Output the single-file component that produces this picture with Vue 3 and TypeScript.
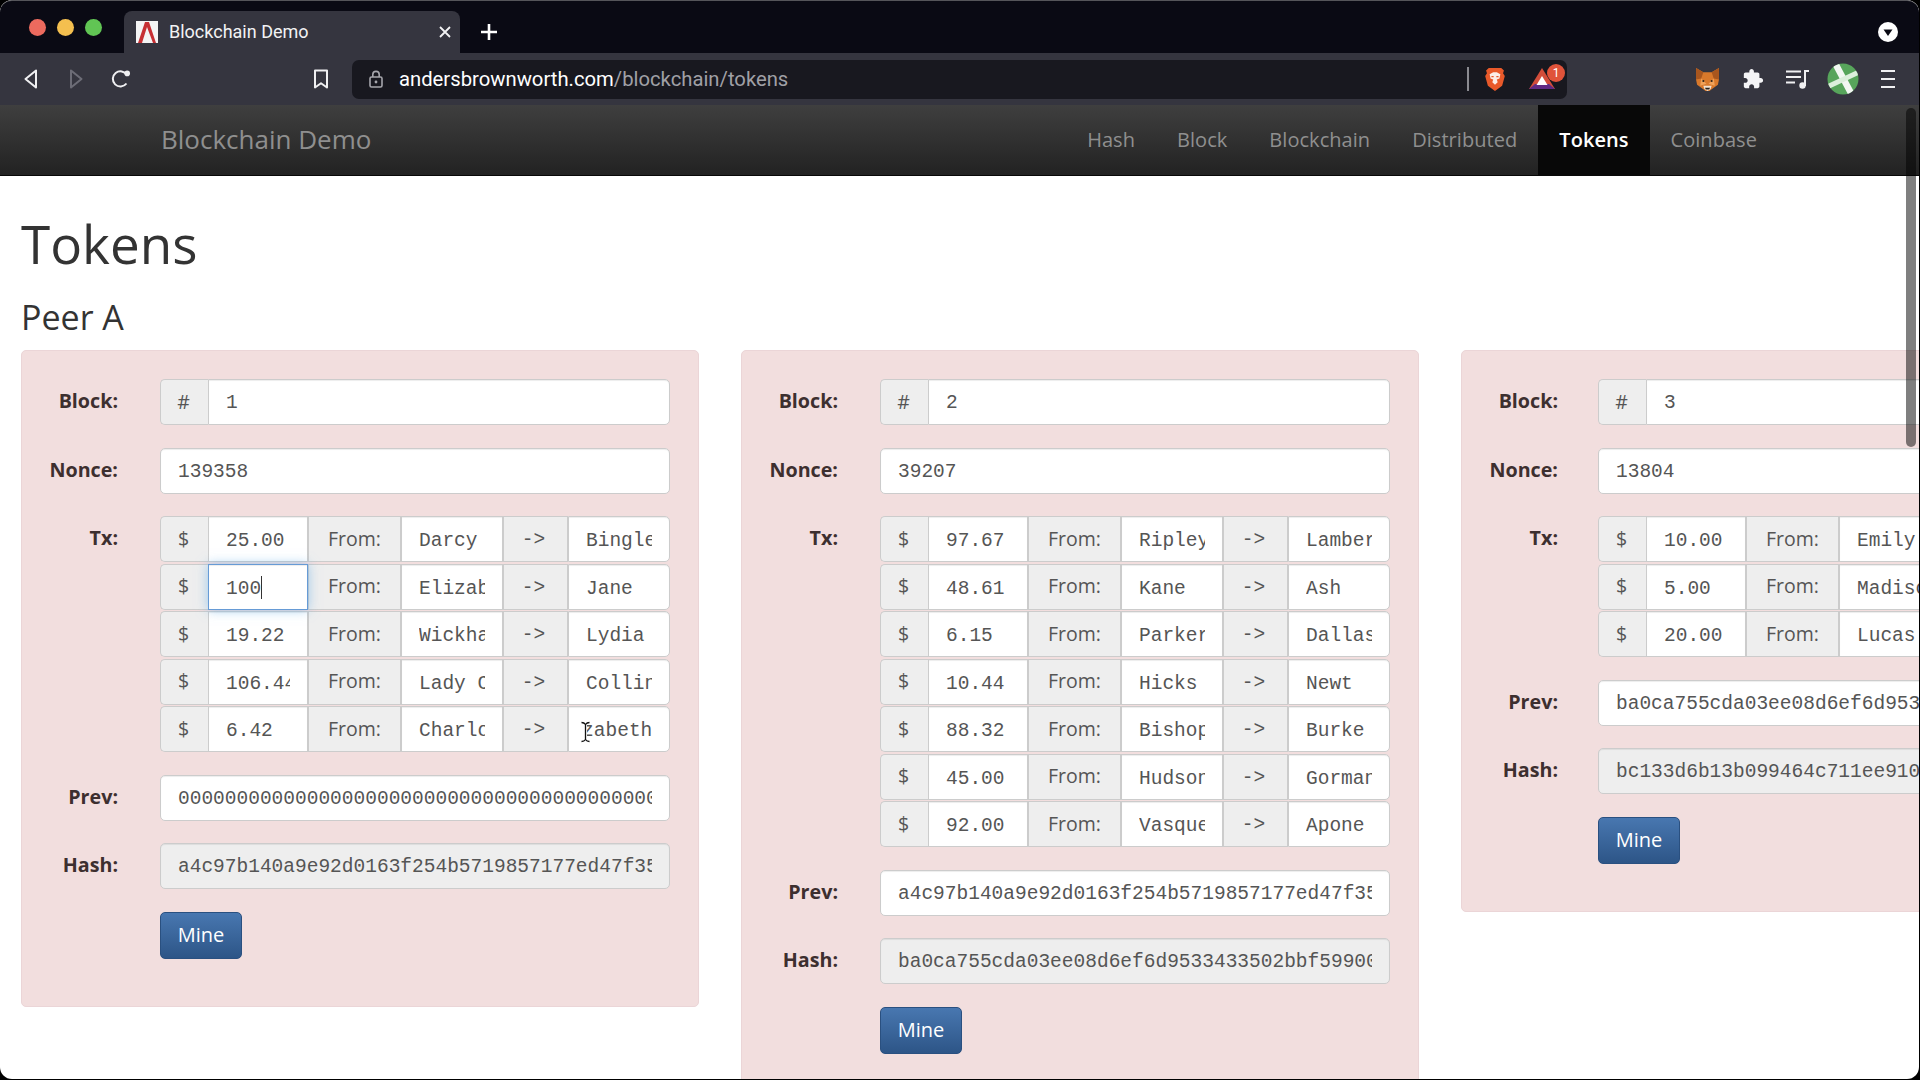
<template>
  <div class="window">
    <div class="tabbar">
      <div class="lights">
        <span class="light red"></span>
        <span class="light yellow"></span>
        <span class="light green"></span>
      </div>
      <div class="tab">
        <svg class="favicon" width="22" height="22" viewBox="0 0 22 22">
          <rect width="22" height="22" fill="#f4f4f4" />
          <path d="M2 22 L9 1 H13 L20 22 H17 L11 6 L6 22 Z" fill="#c62f33" />
        </svg>
        <span class="tab-title">Blockchain Demo</span>
        <svg class="tab-close" width="14" height="14" viewBox="0 0 14 14">
          <path d="M2 2l10 10M12 2L2 12" stroke="#f2f2f4" stroke-width="1.8" />
        </svg>
      </div>
      <svg class="new-tab" width="18" height="18" viewBox="0 0 18 18">
        <path d="M9 1v16M1 9h16" stroke="#fff" stroke-width="2.6" />
      </svg>
      <svg class="tab-search" width="20" height="20" viewBox="0 0 20 20">
        <circle cx="10" cy="10" r="10" fill="#fff" />
        <path d="M5.5 7.5h9L10 14z" fill="#0a0a14" />
      </svg>
    </div>

    <div class="toolbar">
      <button class="tool-btn">
        <svg width="16" height="22" viewBox="0 0 16 22">
          <path d="M13 2.5v17L2.5 11z" fill="none" stroke="#f0f0f2" stroke-width="2" stroke-linejoin="round" />
        </svg>
      </button>
      <button class="tool-btn">
        <svg width="16" height="22" viewBox="0 0 16 22">
          <path d="M3 2.5v17L13.5 11z" fill="none" stroke="#6c6c76" stroke-width="2" stroke-linejoin="round" />
        </svg>
      </button>
      <button class="tool-btn">
        <svg width="22" height="22" viewBox="0 0 22 22">
          <path d="M16.5 15.5a7.6 7.6 0 1 1 .4-8.6" fill="none" stroke="#f0f0f2" stroke-width="2" />
          <circle cx="17.2" cy="5.4" r="2.8" fill="#f0f0f2" />
        </svg>
      </button>
      <button class="tool-btn bookmark">
        <svg width="16" height="20" viewBox="0 0 16 20">
          <path d="M2 1.5h12v17l-6-4.2-6 4.2z" fill="none" stroke="#f0f0f2" stroke-width="2" stroke-linejoin="round" />
        </svg>
      </button>
      <div class="urlbar">
        <svg class="lock" width="14" height="18" viewBox="0 0 14 18">
          <rect x="1" y="7" width="12" height="10" rx="1.5" fill="none" stroke="#a6a6ac" stroke-width="1.6" />
          <path d="M3.8 7V4.6a3.2 3.2 0 0 1 6.4 0V7" fill="none" stroke="#a6a6ac" stroke-width="1.6" />
          <circle cx="7" cy="12" r="1.4" fill="#a6a6ac" />
        </svg>
        <span class="url"><span class="url-host">andersbrownworth.com</span>/blockchain/tokens</span>
        <span class="url-divider"></span>
        <svg class="brave" width="22" height="25" viewBox="0 0 24 28">
          <path d="M5 1h14l3 3-1 3 2 3-3 11-8 6-8-6L1 10l2-3-1-3z" fill="#e8592a" />
          <path d="M6 8l4-2h4l4 2-1 5-3 1 1 3-3 3-3-3 1-3-3-1z" fill="#fbeee8" />
          <path d="M8 10h2.500v1.500H8zM13.500 10H16v1.500h-2.500z" fill="#e8592a" />
        </svg>
        <div class="bat">
          <svg width="26" height="22" viewBox="0 0 26 22">
            <path d="M13 0L0 21h26z" fill="#d24d3a" />
            <path d="M0 21l6-5h14l6 5z" fill="#5f2a83" />
            <path d="M13 8l-5.500 9h11z" fill="#fff" />
          </svg>
          <span class="bat-badge">1</span>
        </div>
      </div>
      <div class="extensions">
        <button class="tool-btn">
          <svg width="25" height="25" viewBox="0 0 24 24">
            <path d="M1 1l7 4h8l7-4v11l-1 5-4 3-3 2-1 1h-4l-1-1-3-2-4-3-1-5z" fill="#d9792b" />
            <path d="M1 1l7 4-2 6-5 1zM23 1l-7 4 2 6 5 1z" fill="#a8561e" />
            <path d="M6 11l5 5-6 2zM18 11l-5 5 6 2z" fill="#efa25a" />
            <path d="M8 18h8l-1 3-3 2-3-2z" fill="#f3e4d3" />
            <path d="M9.500 20h5l-1 1.500h-3z" fill="#2b2119" />
            <circle cx="8" cy="13.500" r="1" fill="#2b2119" />
            <circle cx="16" cy="13.500" r="1" fill="#2b2119" />
          </svg>
        </button>
        <button class="tool-btn">
          <svg width="22" height="22" viewBox="0 0 24 24">
            <path fill="#f4f4f6" d="M20.5 11H19V7c0-1.1-.9-2-2-2h-4V3.5C13 2.12 11.88 1 10.5 1S8 2.12 8 3.5V5H4c-1.1 0-1.99.9-1.99 2v3.8H3.5c1.49 0 2.7 1.21 2.7 2.7s-1.21 2.7-2.7 2.7H2V20c0 1.1.9 2 2 2h3.8v-1.5c0-1.49 1.21-2.7 2.7-2.7 1.49 0 2.7 1.21 2.7 2.7V22H17c1.1 0 2-.9 2-2v-4h1.5c1.38 0 2.5-1.12 2.5-2.5S21.88 11 20.5 11z" />
          </svg>
        </button>
        <button class="tool-btn">
          <svg width="24" height="20" viewBox="0 0 24 20">
            <path d="M0 2.500h15M0 8h15M0 13.500h9" stroke="#f0f0f2" stroke-width="2" />
            <path d="M19 17V2h4" fill="none" stroke="#f0f0f2" stroke-width="2" />
            <circle cx="16.500" cy="16.500" r="3.200" fill="#f0f0f2" />
          </svg>
        </button>
        <button class="tool-btn">
          <svg width="32" height="32" viewBox="0 0 32 32">
            <defs>
              <clipPath id="avatar-clip"><circle cx="16" cy="16" r="15.500" /></clipPath>
            </defs>
            <circle cx="16" cy="16" r="15.500" fill="#57a55b" />
            <g clip-path="url(#avatar-clip)">
              <path d="M8 0l17 32" stroke="#f2f7f2" stroke-width="6.500" />
              <path d="M0 24L32 9" stroke="#dcefdc" stroke-width="5" />
            </g>
          </svg>
        </button>
        <button class="tool-btn">
          <svg width="14" height="20" viewBox="0 0 14 20">
            <path d="M0 2h14M0 10h14M0 18h14" stroke="#f0f0f2" stroke-width="2" />
          </svg>
        </button>
      </div>
    </div>

    <nav class="navbar">
      <a class="brand">Blockchain Demo</a>
      <ul class="nav-links">
        <li v-for="item in navItems" :key="item" :class="{ active: item === 'Tokens' }">{{ item }}</li>
      </ul>
    </nav>

    <main ref="pageEl" class="page">
      <h1>Tokens</h1>
      <h2>Peer A</h2>
      <div class="cards">
        <section v-for="block in blocks" :key="block.id" class="card">
          <div class="group">
            <label>Block:</label>
            <div class="joined">
              <span class="addon first">#</span>
              <input class="field" :value="block.id" />
            </div>
          </div>
          <div class="group">
            <label>Nonce:</label>
            <input class="field" :value="block.nonce" />
          </div>
          <div class="group">
            <label>Tx:</label>
            <div class="tx-list">
              <div v-for="tx in block.txs" :key="tx.amount" class="tx-row">
                <span class="addon first">$</span>
                <div class="cell">
                  <input class="field flat" :class="{ focused: tx.editing }" :value="tx.amount" />
                  <span v-if="tx.editing" class="caret"></span>
                </div>
                <span class="addon">From:</span>
                <input class="field flat" :value="tx.from" />
                <span class="addon mono">-&gt;</span>
                <div class="cell">
                  <input class="field flat last" :class="{ 'at-end': tx.hovered }" :value="tx.to" />
                  <svg v-if="tx.hovered" class="ibeam" width="11" height="22" viewBox="0 0 11 22">
                    <path d="M1.500 1.500c2 0 3 .5 4 2 1-1.500 2-2 4-2M5.500 3.500v15M1.500 20.500c2 0 3-.5 4-2 1 1.500 2 2 4 2" fill="none" stroke="#fff" stroke-width="3" />
                    <path d="M1.500 1.500c2 0 3 .5 4 2 1-1.500 2-2 4-2M5.500 3.500v15M1.500 20.500c2 0 3-.5 4-2 1 1.500 2 2 4 2" fill="none" stroke="#111" stroke-width="1.300" />
                  </svg>
                </div>
              </div>
            </div>
          </div>
          <div class="group">
            <label>Prev:</label>
            <input class="field" :value="block.prev" />
          </div>
          <div class="group">
            <label>Hash:</label>
            <input class="field" :value="block.hash" disabled />
          </div>
          <div class="group">
            <span></span>
            <button class="mine">Mine</button>
          </div>
        </section>
      </div>
    </main>

    <div class="scrollbar"></div>
  </div>
</template>

<script setup lang="ts">
import { onMounted, ref } from 'vue'

interface Tx {
  amount: string
  from: string
  to: string
  editing?: boolean
  hovered?: boolean
}

interface Block {
  id: number
  nonce: string
  txs: Tx[]
  prev: string
  hash: string
}

const navItems = ['Hash', 'Block', 'Blockchain', 'Distributed', 'Tokens', 'Coinbase']

const blocks: Block[] = [
  {
    id: 1,
    nonce: '139358',
    txs: [
      { amount: '25.00', from: 'Darcy', to: 'Bingley' },
      { amount: '100', from: 'Elizabeth', to: 'Jane', editing: true },
      { amount: '19.22', from: 'Wickham', to: 'Lydia' },
      { amount: '106.44', from: 'Lady Catherine', to: 'Collins' },
      { amount: '6.42', from: 'Charlotte', to: 'Elizabeth', hovered: true }
    ],
    prev: '0'.repeat(64),
    hash: 'a4c97b140a9e92d0163f254b5719857177ed47f35'
  },
  {
    id: 2,
    nonce: '39207',
    txs: [
      { amount: '97.67', from: 'Ripley', to: 'Lambert' },
      { amount: '48.61', from: 'Kane', to: 'Ash' },
      { amount: '6.15', from: 'Parker', to: 'Dallas' },
      { amount: '10.44', from: 'Hicks', to: 'Newt' },
      { amount: '88.32', from: 'Bishop', to: 'Burke' },
      { amount: '45.00', from: 'Hudson', to: 'Gorman' },
      { amount: '92.00', from: 'Vasquez', to: 'Apone' }
    ],
    prev: 'a4c97b140a9e92d0163f254b5719857177ed47f35',
    hash: 'ba0ca755cda03ee08d6ef6d9533433502bbf59900'
  },
  {
    id: 3,
    nonce: '13804',
    txs: [
      { amount: '10.00', from: 'Emily', to: '' },
      { amount: '5.00', from: 'Madison', to: '' },
      { amount: '20.00', from: 'Lucas', to: '' }
    ],
    prev: 'ba0ca755cda03ee08d6ef6d9533433502bbf59900',
    hash: 'bc133d6b13b099464c711ee910'
  }
]

const pageEl = ref<HTMLElement>()

onMounted(() => {
  // the long name in the hovered field stays scrolled to its end
  pageEl.value?.querySelectorAll<HTMLInputElement>('.at-end').forEach((el) => {
    el.scrollLeft = el.scrollWidth
  })
})
</script>

<style>
html,
body {
  margin: 0;
  background: #000;
  overflow: hidden;
}
</style>

<style scoped>
.window {
  width: 1919px;
  height: 1079px;
  display: flex;
  flex-direction: column;
  position: relative;
  overflow: hidden;
  border-radius: 12px;
  background: #fff;
  font-family: "Open Sans", "Liberation Sans", sans-serif;
}

.tabbar {
  height: 53px;
  flex: none;
  box-sizing: border-box;
  display: flex;
  align-items: flex-end;
  background: #0a0a14;
  border-top: 1px solid #55555a;
  border-radius: 12px 12px 0 0;
}

.lights {
  display: flex;
  gap: 11px;
  margin: 0 0 17px 29px;
  width: 95px;
}

.light {
  width: 17px;
  height: 17px;
  border-radius: 50%;
}

.red { background: #ec6a5e; }
.yellow { background: #f4bf4f; }
.green { background: #61c554; }

.tab {
  width: 336px;
  height: 42px;
  box-sizing: border-box;
  padding: 0 8px 0 12px;
  display: flex;
  align-items: center;
  background: #35353f;
  border-radius: 8px 8px 0 0;
  color: #f2f2f4;
  font: 18px Roboto, sans-serif;
}

.favicon {
  flex: none;
  margin-right: 11px;
}

.tab-title {
  flex: 1;
  margin-bottom: 2px;
}

.new-tab {
  margin: 0 0 12px 20px;
}

.tab-search {
  margin: 0 21px 11px auto;
}

.toolbar {
  height: 52px;
  flex: none;
  display: flex;
  align-items: center;
  padding-left: 8px;
  background: #35353f;
}

.tool-btn {
  width: 45px;
  height: 44px;
  padding: 0;
  display: flex;
  align-items: center;
  justify-content: center;
  flex: none;
  border: 0;
  background: none;
}

.bookmark {
  margin-left: 155px;
}

.urlbar {
  width: 1215px;
  height: 39px;
  margin-left: 9px;
  box-sizing: border-box;
  display: flex;
  align-items: center;
  flex: none;
  padding-left: 17px;
  background: #18181f;
  border-radius: 7px;
  font: 20.25px Roboto, sans-serif;
  color: #a0a0a6;
}

.lock {
  flex: none;
  margin-right: 16px;
}

.url {
  flex: 1;
}

.url-host {
  color: #fff;
}

.url-divider {
  width: 2px;
  height: 24px;
  background: #8a8a90;
}

.brave {
  margin-left: 15px;
}

.bat {
  position: relative;
  width: 26px;
  height: 22px;
  margin: 0 12px 0 23px;
}

.bat-badge {
  position: absolute;
  top: -4px;
  left: 18px;
  width: 18px;
  height: 18px;
  border-radius: 50%;
  background: #e0533a;
  color: #fff;
  font-size: 12px;
  line-height: 18px;
  text-align: center;
}

.extensions {
  display: flex;
  margin-left: 118px;
}

.navbar {
  height: 71px;
  flex: none;
  box-sizing: border-box;
  display: flex;
  align-items: stretch;
  justify-content: space-between;
  padding: 0 141px 0 161px;
  background: linear-gradient(#3f3f3f, #222);
  border-bottom: 1px solid #080808;
}

.brand {
  align-self: center;
  margin-bottom: 2px;
  font-size: 26px;
  color: #8f8f8f;
}

.nav-links {
  display: flex;
  margin: 0;
  padding: 0;
  list-style: none;
}

.nav-links li {
  display: flex;
  align-items: center;
  padding: 0 21px 2px;
  font-size: 20px;
  letter-spacing: 0.05px;
  color: #8f8f8f;
}

.nav-links li.active {
  background: #080808;
  color: #fff;
  font-weight: 600;
}

.page {
  flex: 1;
  min-height: 0;
  overflow: hidden;
  padding-left: 21px;
  color: #333;
}

h1 {
  margin: 38px 0 0;
  font-size: 53px;
  font-weight: 400;
  line-height: 60px;
}

h2 {
  margin: 23px 0 13px;
  font-size: 34px;
  font-weight: 400;
  line-height: 40px;
}

.cards {
  display: flex;
  align-items: flex-start;
  gap: 42px;
}

.card {
  flex: none;
  width: 678px;
  box-sizing: border-box;
  display: flex;
  flex-direction: column;
  gap: 22.5px;
  padding: 28px 28px 47px 0;
  background: #f2dede;
  border: 1px solid #ebd5d7;
  border-radius: 5px;
}

.group {
  display: grid;
  grid-template-columns: 96px 510px;
  column-gap: 42px;
  align-items: start;
}

.card:nth-child(3) .group {
  column-gap: 40px;
}

label {
  padding-top: 8px;
  font-size: 19.7px;
  font-weight: 700;
  line-height: 27px;
  text-align: right;
  color: #3d2f2f;
}

.joined {
  display: grid;
  grid-template-columns: 48px 1fr;
}

.joined .field {
  border-radius: 0 5px 5px 0;
}

.tx-list {
  display: flex;
  flex-direction: column;
  gap: 1.5px;
}

.tx-row {
  display: grid;
  grid-template-columns: 48px 100px 93px 102px 65px 102px;
}

.cell {
  position: relative;
}

.addon {
  display: flex;
  align-items: center;
  justify-content: center;
  box-sizing: border-box;
  height: 46px;
  padding-bottom: 2px;
  background: #eee;
  border: 1px solid #ccc;
  font-size: 19.5px;
  color: #555;
}

.addon.first {
  padding-right: 2px;
  border-right: 0;
  border-radius: 5px 0 0 5px;
}

.addon.mono {
  padding: 2px 4px 0 0;
  font-family: "Liberation Mono", monospace;
}

.field {
  display: block;
  box-sizing: border-box;
  width: 100%;
  height: 46px;
  margin: 0;
  padding: 2px 17px 0;
  background: #fff;
  border: 1px solid #ccc;
  border-radius: 5px;
  box-shadow: inset 0 1px 1px rgba(0, 0, 0, 0.075);
  outline: 0;
  font: 19.5px "Liberation Mono", monospace;
  color: #555;
}

.field.flat {
  padding-top: 4px;
  border-radius: 0;
}

.field.flat.last {
  border-radius: 0 5px 5px 0;
}

.field:disabled {
  background: #eee;
  opacity: 1;
  -webkit-text-fill-color: #555;
}

.field.focused {
  position: relative;
  z-index: 1;
  border-color: #669bd6;
  box-shadow: inset 0 1px 1px rgba(0, 0, 0, 0.075), 0 0 11px rgba(102, 175, 233, 0.6);
}

.caret {
  position: absolute;
  z-index: 2;
  top: 12px;
  left: 53px;
  width: 1px;
  height: 23px;
  background: #333;
}

.ibeam {
  position: absolute;
  top: 15px;
  left: 12px;
}

.mine {
  justify-self: start;
  width: 82px;
  height: 47px;
  padding: 0 0 2px;
  background: linear-gradient(#4877b0, #2d5587);
  border: 1px solid #2a5080;
  border-radius: 5px;
  font: 20px "Open Sans", sans-serif;
  color: #fff;
}

.scrollbar {
  position: absolute;
  top: 108px;
  right: 3px;
  bottom: 632px;
  width: 10px;
  border-radius: 5px;
  background: rgba(0, 0, 0, 0.5);
}
</style>
